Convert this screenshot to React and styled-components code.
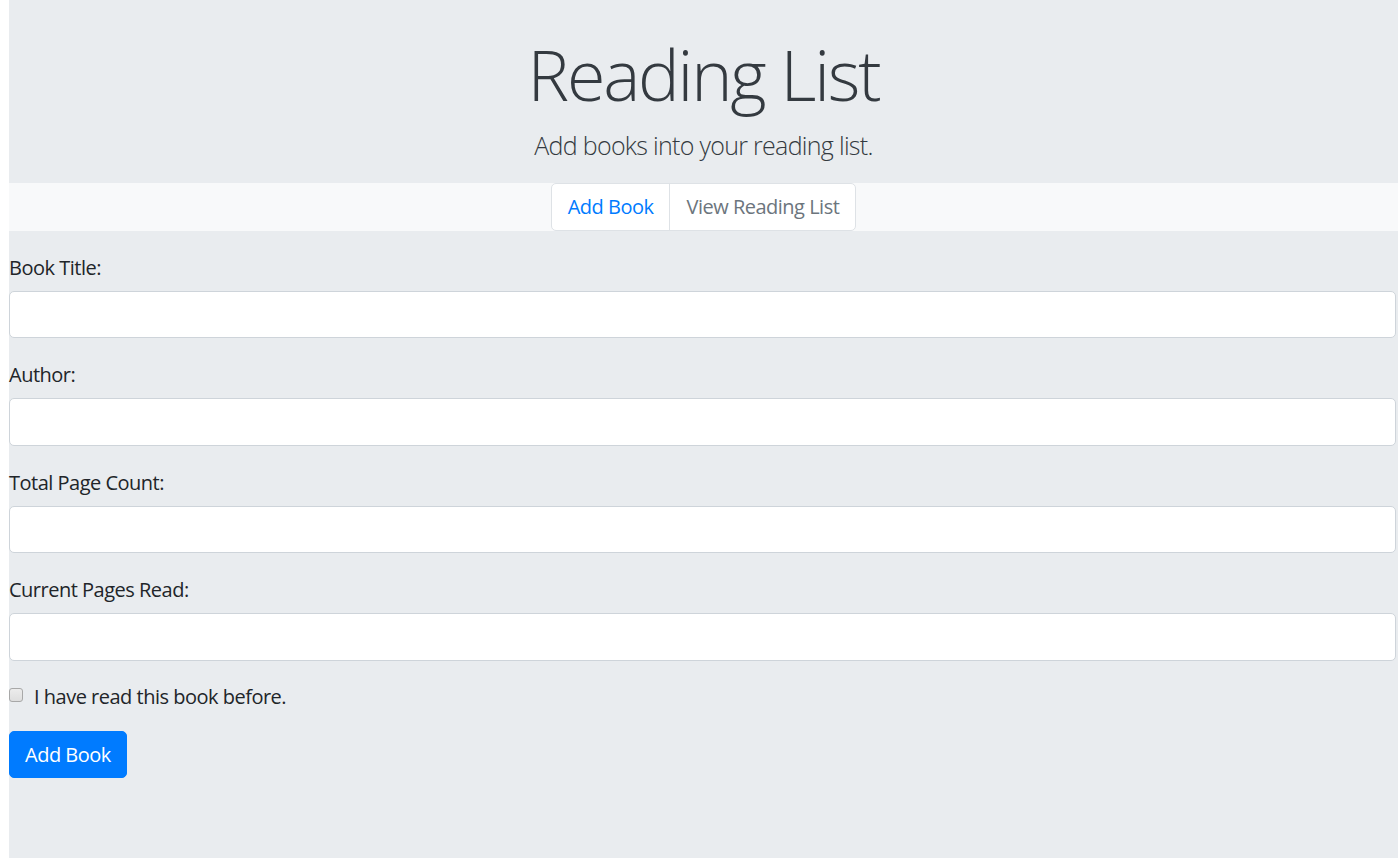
import React from "react";
import styled, { createGlobalStyle } from "styled-components";

const Global = createGlobalStyle`
  html, body { margin: 0; padding: 0; background: #fff; overflow: hidden; }
  body { font-family: "Open Sans", "Noto Sans", sans-serif; color: #212529; }
  * { box-sizing: border-box; }
`;

const Page = styled.div`
  margin-left: 9px;
  min-height: 858px;
  background: #e9ecef;
  display: flex;
  flex-direction: column;
`;

const Jumbo = styled.header`
  padding: 32px 20px 19px;
  text-align: center;
  background: #e9ecef;
`;

const Title = styled.h1`
  margin: 0 0 10px;
  font-size: 70px;
  font-weight: 300;
  line-height: 1.2;
  letter-spacing: -2.2px;
  color: #343a40;
`;

const Lead = styled.p`
  margin: 0;
  font-size: 25px;
  font-weight: 300;
  line-height: 1.5;
  letter-spacing: -0.7px;
  color: #343a40;
  position: relative;
  top: 1px;
`;

const NavBar = styled.nav`
  background: #f8f9fa;
  display: flex;
  justify-content: center;
  height: 48px;
`;

const NavGroup = styled.div`
  display: flex;
  background: #fff;
  border: 1px solid #dee2e6;
  border-radius: 5px;
`;

const NavItem = styled.a`
  display: flex;
  align-items: center;
  padding: 1px 16px 0;
  font-size: 20px;
  line-height: 1.5;
  letter-spacing: -0.5px;
  color: ${(p) => (p.$active ? "#007bff" : "#6c757d")};
  text-decoration: none;
  cursor: pointer;
  & + & { border-left: 1px solid #dee2e6; }
`;

const Form = styled.form`
  padding: 20px 2px 0 0;
`;

const Group = styled.div`
  margin-bottom: 20px;
`;

const Label = styled.label`
  display: block;
  padding-top: 2px;
  margin-bottom: 8px;
  font-size: 20px;
  line-height: 1.5;
  letter-spacing: -0.5px;
  color: #212529;
`;

const Input = styled.input`
  display: block;
  width: 100%;
  height: 47.5px;
  padding: 7.5px 15px;
  font-size: 20px;
  font-family: inherit;
  color: #495057;
  background: #fff;
  border: 1px solid #ced4da;
  border-radius: 5px;
  outline: none;
`;

const Check = styled.div`
  position: relative;
  padding: 1px 0 0 25px;
  margin-bottom: 19px;
  font-size: 20px;
  line-height: 1.5;
  letter-spacing: -0.5px;
`;

const CheckInput = styled.input`
  appearance: none;
  position: absolute;
  left: 0;
  top: 7px;
  width: 14px;
  height: 14px;
  margin: 0;
  border: 1px solid #a8a8a8;
  border-radius: 3px;
  background: linear-gradient(#ececec, #dedede);
`;

const Button = styled.button`
  display: inline-block;
  padding: 8px 15px 7px;
  font-size: 20px;
  line-height: 1.5;
  letter-spacing: -0.5px;
  font-family: inherit;
  color: #fff;
  background: #007bff;
  border: 1px solid #007bff;
  border-radius: 5px;
  cursor: pointer;
`;

const fields = ["Book Title:", "Author:", "Total Page Count:", "Current Pages Read:"];

export default function App() {
  return (
    <>
      <Global />
      <Page>
        <Jumbo>
          <Title>Reading List</Title>
          <Lead>Add books into your reading list.</Lead>
        </Jumbo>
        <NavBar>
          <NavGroup>
            <NavItem $active>Add Book</NavItem>
            <NavItem>View Reading List</NavItem>
          </NavGroup>
        </NavBar>
        <Form onSubmit={(e) => e.preventDefault()}>
          {fields.map((f) => (
            <Group key={f}>
              <Label>{f}</Label>
              <Input type="text" />
            </Group>
          ))}
          <Check>
            <CheckInput type="checkbox" id="read" />
            <label htmlFor="read">I have read this book before.</label>
          </Check>
          <Button type="submit">Add Book</Button>
        </Form>
      </Page>
    </>
  );
}
